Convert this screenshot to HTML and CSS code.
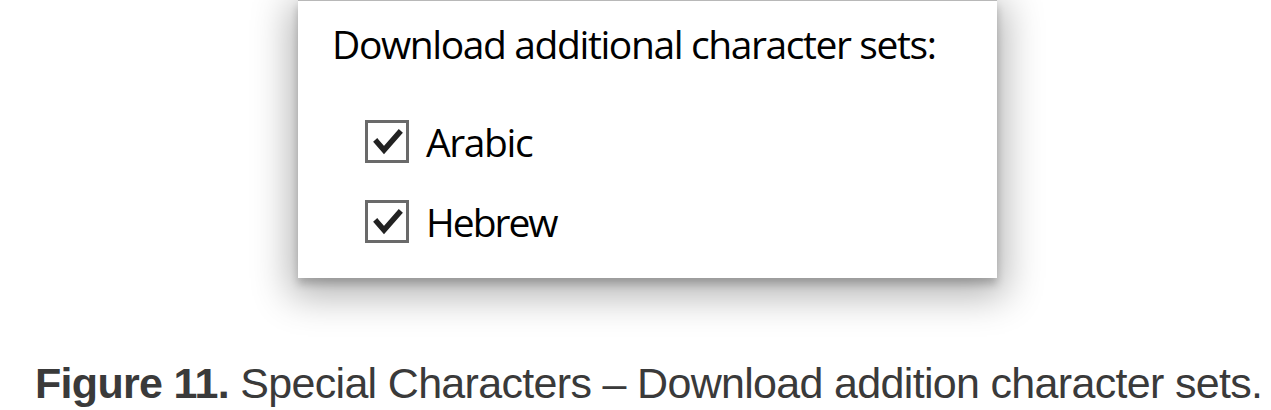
FILE: index.html
```html
<!DOCTYPE html>
<html>
<head>
<meta charset="utf-8">
<link rel="stylesheet" href="styles.css">
</head>
<body>
<div class="figure">
  <div class="panel">
    <div class="heading">Download additional character sets:</div>
    <div class="options">
      <label class="option">
        <span class="box"><svg viewBox="0 0 37 37" width="37" height="37"><path d="M8 19 L15 27 L30 10" fill="none" stroke="#222" stroke-width="5.5" stroke-linecap="square" stroke-linejoin="miter"/></svg></span>
        <span class="label">Arabic</span>
      </label>
      <label class="option">
        <span class="box"><svg viewBox="0 0 37 37" width="37" height="37"><path d="M8 19 L15 27 L30 10" fill="none" stroke="#222" stroke-width="5.5" stroke-linecap="square" stroke-linejoin="miter"/></svg></span>
        <span class="label hebrew">Hebrew</span>
      </label>
    </div>
  </div>
  <p class="caption"><b>Figure 11.</b> Special Characters – Download addition character sets.</p>
</div>
</body>
</html>
```
FILE: styles.css
```css
html, body {
  margin: 0;
  padding: 0;
  background: #fff;
}
.figure {
  width: 1271px;
  height: 410px;
  overflow: hidden;
}
.panel {
  margin-left: 298px;
  width: 699px;
  height: 278px;
  box-sizing: border-box;
  background: #fff;
  border-top: 1px solid #b8b8b8;
  box-shadow: 0 6px 8px rgba(0,0,0,0.2), 0 10px 36px 8px rgba(0,0,0,0.3);
  padding: 19px 0 0 34px;
  font-family: "Open Sans", "Noto Sans", sans-serif;
  color: #000;
}
.heading {
  font-size: 39px;
  line-height: 48px;
  letter-spacing: -1.4px;
}
.options {
  display: flex;
  flex-direction: column;
  gap: 37px;
  margin-top: 52px;
  margin-left: 33px;
}
.option {
  display: flex;
  align-items: center;
  gap: 17px;
  height: 43px;
}
.box {
  width: 44px;
  height: 43px;
  box-sizing: border-box;
  border: 3px solid #6a6a6a;
  background: #fff;
  display: flex;
  align-items: center;
  justify-content: center;
}
.box svg { display: block; }
.label {
  font-size: 39px;
  line-height: 43px;
  letter-spacing: -1.4px;
}
.label.hebrew {
  letter-spacing: -2px;
}
.caption {
  margin: 80px 0 0 35px;
  font-family: "Liberation Sans", Arial, sans-serif;
  font-size: 43px;
  line-height: 50px;
  letter-spacing: -0.68px;
  color: #3a3a3a;
  white-space: nowrap;
}
.caption b { font-weight: bold; }
```
